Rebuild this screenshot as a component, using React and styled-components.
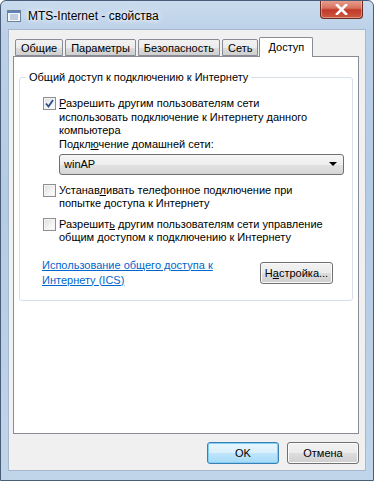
import styled, { createGlobalStyle } from 'styled-components';

const GlobalStyle = createGlobalStyle`
html, body {
margin: 0;
padding: 0;
background: #ffffff;
}
body {
font-family: 'Liberation Sans', Arial, sans-serif;
font-size: 11px;
color: #000000;
}
`;

const tabs = ['Общие', 'Параметры', 'Безопасность', 'Сеть', 'Доступ'];

const App = () => {
    return (
        <>
            <GlobalStyle />
            <Window>
                <TitleBar>
                    <WinIcon>
                        <svg width="14" height="12" viewBox="0 0 14 12">
                            <rect x="0.5" y="0.5" width="13" height="11" fill="#f4f7fb" stroke="#6d7f99" />
                            <rect x="1" y="1" width="12" height="2" fill="#5d83b8" />
                            <line x1="3" y1="5" x2="11" y2="5" stroke="#8fa3bd" />
                            <line x1="3" y1="7" x2="11" y2="7" stroke="#8fa3bd" />
                            <line x1="3" y1="9" x2="11" y2="9" stroke="#8fa3bd" />
                        </svg>
                    </WinIcon>
                    <Title>MTS-Internet - свойства</Title>
                    <CloseButton>
                        <svg width="13" height="11" viewBox="0 0 13 11">
                            <path d="M2 1 L11 10 M11 1 L2 10" stroke="#ffffff" strokeWidth="2.6" strokeLinecap="square" />
                        </svg>
                    </CloseButton>
                </TitleBar>

                <Client>
                    <TabRow>
                        {tabs.map((t) => (
                            <Tab key={t} $active={t === 'Доступ'}>{t}</Tab>
                        ))}
                    </TabRow>

                    <Panel>
                        <Group>
                            <Legend>Общий доступ к подключению к Интернету</Legend>

                            <CheckRow>
                                <Check $checked>
                                    <svg width="9" height="9" viewBox="0 0 9 9">
                                        <path d="M1 4.5 L3.5 7.5 L8 1" fill="none" stroke="#2a4f8a" strokeWidth="1.8" />
                                    </svg>
                                </Check>
                                <CheckText>
                                    <u>Р</u>азрешить другим пользователям сети<br />
                                    использовать подключение к Интернету данного<br />
                                    компьютера
                                </CheckText>
                            </CheckRow>

                            <SubBlock>
                                <SubLabel>Подкл<u>ю</u>чение домашней сети:</SubLabel>
                                <Select>
                                    <span>winAP</span>
                                    <Arrow />
                                </Select>
                            </SubBlock>

                            <CheckRow $top={9}>
                                <Check />
                                <CheckText>
                                    Устанав<u>л</u>ивать телефонное подключение при<br />
                                    попытке доступа к Интернету
                                </CheckText>
                            </CheckRow>

                            <CheckRow $top={7}>
                                <Check />
                                <CheckText>
                                    Разрешит<u>ь</u> другим пользователям сети управление<br />
                                    общим доступом к подключению к Интернету
                                </CheckText>
                            </CheckRow>

                            <LinkRow>
                                <Link>Использование общего доступа к<br />Интернету (ICS)</Link>
                                <Button $width={73}>Н<u>а</u>стройка...</Button>
                            </LinkRow>
                        </Group>
                    </Panel>

                    <Footer>
                        <Button $width={72} $default>OK</Button>
                        <Button $width={72}>Отмена</Button>
                    </Footer>
                </Client>
            </Window>
        </>
    )
};

const Window = styled.div`
width: 374px;
height: 481px;
box-sizing: border-box;
border: 1px solid #4a5d78;
border-radius: 6px 6px 0 0;
background: linear-gradient(180deg, #c9dbee 0px, #bcd1e8 30px, #b4cbe4 200px, #c1d5ea 481px);
display: flex;
flex-direction: column;
overflow: hidden;
`;

const TitleBar = styled.div`
height: 28px;
flex-shrink: 0;
display: flex;
align-items: center;
padding-left: 6px;
position: relative;
`;

const WinIcon = styled.div`
width: 16px;
display: flex;
margin-top: 1px;
`;

const Title = styled.div`
margin-left: 5px;
margin-top: 1px;
font-size: 12px;
color: #000000;
text-shadow: 0 0 8px #ffffff, 0 0 4px #ffffff;
`;

const CloseButton = styled.div`
position: absolute;
top: -1px;
right: 10px;
width: 41px;
height: 18px;
border: 1px solid #6b2a22;
border-top: none;
border-radius: 0 0 4px 4px;
background: linear-gradient(180deg, #e8a393 0%, #d7735d 45%, #c1392a 55%, #cd5a3f 100%);
box-shadow: inset 0 0 0 1px rgba(255, 255, 255, 0.35);
display: flex;
align-items: center;
justify-content: center;
`;

const Client = styled.div`
margin: 0 7px 9px 7px;
flex: 1;
background: #f0f0f0;
border: 1px solid #a6b8cd;
display: flex;
flex-direction: column;
padding: 7px 5px 0 4px;
`;

const TabRow = styled.div`
display: flex;
align-items: flex-end;
padding-left: 2px;
height: 19px;
position: relative;
z-index: 1;
`;

const Tab = styled.div`
height: ${p => p.$active ? '20px' : '17px'};
box-sizing: border-box;
padding: ${p => p.$active ? '2px 8px 0' : '1px 5px 0'};
margin: ${p => p.$active ? '0 0 -1px -1px' : '0 2px 0 0'};
border: 1px solid #898c95;
border-bottom: ${p => p.$active ? 'none' : '1px solid #898c95'};
border-radius: 2px 2px 0 0;
background: ${p => p.$active ? '#ffffff' : 'linear-gradient(180deg, #f2f2f2 0%, #ebebeb 50%, #dddddd 51%, #cfcfcf 100%)'};
color: #000000;
white-space: nowrap;
line-height: 14px;
`;

const Panel = styled.div`
height: 378px;
flex-shrink: 0;
box-sizing: border-box;
background: #ffffff;
border: 1px solid #898c95;
margin-right: 1px;
padding: 14px 5px 0 5px;
`;

const Group = styled.fieldset`
margin: 0;
padding: 14px 8px 0 23px;
height: 230px;
border: 1px solid #d5dfe5;
border-radius: 3px;
box-sizing: border-box;
`;

const Legend = styled.legend`
padding: 0 3px;
margin-left: -17px;
color: #000000;
`;

const CheckRow = styled.div`
display: flex;
align-items: flex-start;
gap: 3px;
margin-top: ${p => p.$top || 0}px;
`;

const Check = styled.div`
width: 13px;
height: 13px;
flex-shrink: 0;
box-sizing: border-box;
border: 1px solid #8f8f8f;
background: linear-gradient(135deg, #dcdcdc 0%, #f4f4f4 60%, #ffffff 100%);
box-shadow: inset 0 0 0 1px #f4f4f4;
display: flex;
align-items: center;
justify-content: center;
`;

const CheckText = styled.div`
line-height: 13.5px;
white-space: nowrap;
`;

const SubBlock = styled.div`
padding-left: 16px;
display: flex;
flex-direction: column;
`;

const SubLabel = styled.div`
line-height: 12px;
`;

const Select = styled.div`
margin-top: 4px;
width: 285px;
height: 21px;
box-sizing: border-box;
border: 1px solid #707070;
border-radius: 3px;
background: linear-gradient(180deg, #f6f6f6 0%, #eeeeee 50%, #e2e2e2 51%, #d6d6d6 100%);
display: flex;
align-items: center;
justify-content: space-between;
padding: 0 6px 0 4px;
`;

const Arrow = styled.div`
width: 0;
height: 0;
border-left: 4px solid transparent;
border-right: 4px solid transparent;
border-top: 4px solid #000000;
`;

const LinkRow = styled.div`
display: flex;
align-items: center;
justify-content: space-between;
margin-top: 13px;
margin-left: -1px;
padding-right: 11px;
`;

const Link = styled.a`
color: #0066cc;
text-decoration: underline;
line-height: 15px;
cursor: pointer;
`;

const Button = styled.div`
width: ${p => p.$width}px;
height: 22px;
box-sizing: border-box;
border: 1px solid ${p => p.$default ? '#3c7fb1' : '#707070'};
border-radius: 3px;
background: ${p => p.$default
        ? 'linear-gradient(180deg, #eaf6fd 0%, #d9f0fc 50%, #bee6fd 51%, #a7d9f5 100%)'
        : 'linear-gradient(180deg, #f2f2f2 0%, #ebebeb 50%, #dddddd 51%, #cfcfcf 100%)'};
box-shadow: inset 0 0 0 1px ${p => p.$default ? '#7fd0f6' : '#fbfbfb'};
display: flex;
align-items: center;
justify-content: center;
white-space: nowrap;
`;

const Footer = styled.div`
display: flex;
justify-content: flex-end;
gap: 8px;
padding: 8px 1px 0 0;
`;

export default App;
